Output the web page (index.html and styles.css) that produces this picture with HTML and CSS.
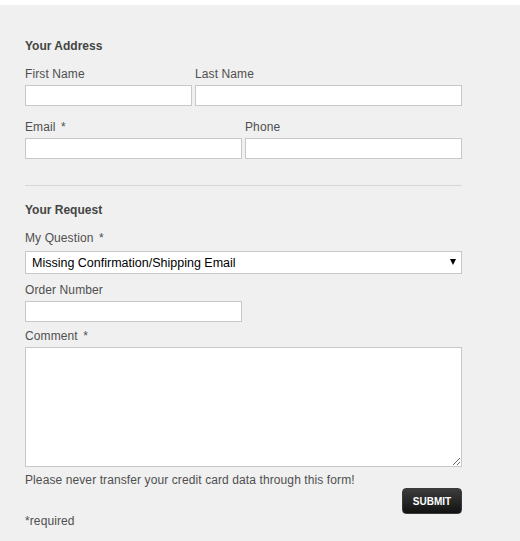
FILE: index.html
```html
<!DOCTYPE html>
<html lang="en">
<head>
    <meta charset="UTF-8">
    <meta name="viewport" content="width=device-width, initial-scale=1.0">
    <title>Contact form</title>
    <link rel="stylesheet" href="styles.css">
</head>
<body>
    <div class="page">
        <form class="form">
            <h3 class="section-title">Your Address</h3>
            <div class="row row-name">
                <div class="field">
                    <label for="firstName">First Name</label>
                    <input type="text" id="firstName">
                </div>
                <div class="field">
                    <label for="lastName">Last Name</label>
                    <input type="text" id="lastName">
                </div>
            </div>
            <div class="row row-contact">
                <div class="field">
                    <label for="email">Email <span class="req">*</span></label>
                    <input type="text" id="email">
                </div>
                <div class="field">
                    <label for="phone">Phone</label>
                    <input type="text" id="phone">
                </div>
            </div>

            <hr class="divider">

            <h3 class="section-title">Your Request</h3>
            <div class="field question">
                <label for="question">My Question <span class="req">*</span></label>
                <div class="select-wrap">
                    <select id="question">
                        <option>Missing Confirmation/Shipping Email</option>
                    </select>
                    <span class="arrow"></span>
                </div>
            </div>
            <div class="field order">
                <label for="orderNumber">Order Number</label>
                <input type="text" id="orderNumber">
            </div>
            <div class="field comment">
                <label for="comment">Comment <span class="req">*</span></label>
                <textarea id="comment"></textarea>
            </div>

            <p class="note">Please never transfer your credit card data through this form!</p>
            <div class="actions">
                <button type="button" class="submit">SUBMIT</button>
            </div>
            <p class="required">*required</p>
        </form>
    </div>
</body>
</html>
```

FILE: styles.css
```css
body {
    margin: 0;
    padding: 0;
    background-color: #ffffff;
    font-family: "Liberation Sans", Arial, sans-serif;
    font-size: 12px;
    letter-spacing: 0.1px;
    color: #4f4f4f;
}
.page {
    margin-top: 5px;
    min-height: 536px;
    box-sizing: border-box;
    padding: 32px 0 0 25px;
    background-color: #eff0ef;
}
.form {
    width: 437px;
}
.section-title {
    margin: 0 0 11px 0;
    padding-top: 1px;
    font-size: 12px;
    line-height: 16px;
    font-weight: bold;
    color: #444444;
    letter-spacing: 0;
}
.row {
    display: grid;
    column-gap: 3px;
    margin-bottom: 12px;
}
.row-name {
    grid-template-columns: 167px 267px;
}
.row-contact {
    grid-template-columns: 1fr 1fr;
    margin-bottom: 0;
}
label {
    display: block;
    padding-top: 1px;
    line-height: 16px;
    margin-bottom: 3px;
}
.req {
    margin-left: 2px;
}
input,
select,
textarea {
    display: block;
    box-sizing: border-box;
    width: 100%;
    margin: 0;
    border: 1px solid #c8c8c8;
    border-radius: 0;
    background-color: #ffffff;
    font-family: "Liberation Sans", Arial, sans-serif;
    outline: none;
}
input {
    height: 21px;
    padding: 0 4px;
    font-size: 12px;
}
.divider {
    margin: 26px 0 15px 0;
    border: 0;
    border-top: 1px solid #d5d6d5;
    height: 0;
}
.question {
    margin-bottom: 7px;
}
.question label {
    margin-bottom: 5px;
}
.select-wrap {
    position: relative;
}
select {
    height: 23px;
    padding: 0 0 0 6px;
    font-size: 12.5px;
    letter-spacing: 0;
    color: #000000;
    appearance: none;
    -webkit-appearance: none;
}
.arrow {
    position: absolute;
    right: 6px;
    top: 8px;
    width: 0;
    height: 0;
    border-left: 3.5px solid transparent;
    border-right: 3.5px solid transparent;
    border-top: 6px solid #000000;
}
.order {
    width: 217px;
    margin-bottom: 5px;
}
textarea {
    height: 120px;
    padding: 4px;
    font-size: 12px;
}
.note {
    margin: 5px 0 0 0;
    padding-top: 1px;
    line-height: 15px;
}
.actions {
    display: flex;
    justify-content: flex-end;
}
.submit {
    width: 60px;
    height: 26px;
    padding: 0;
    border: 1px solid #3a3a3a;
    border-radius: 4px;
    background: linear-gradient(#3c3c3c, #121212);
    color: #ffffff;
    font-family: "Liberation Sans", Arial, sans-serif;
    font-size: 10px;
    font-weight: bold;
    letter-spacing: 0;
    cursor: pointer;
}
.required {
    margin: 0;
    line-height: 14px;
}
```
